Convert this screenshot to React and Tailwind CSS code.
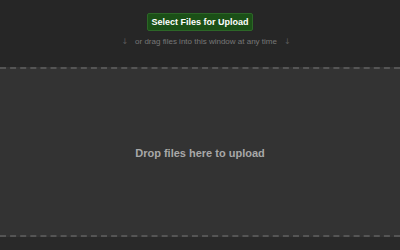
export default function App() {
  return (
    <div className="w-[400px] h-[250px] bg-[#262626] flex flex-col overflow-hidden" style={{ fontFamily: '"Liberation Sans", Arial, sans-serif' }}>
      <div className="h-[67px] flex flex-col items-center pt-[13px]">
        <button className="h-[18px] w-[106px] bg-[#1b5017] border border-[#2c6627] rounded-[2px] text-white text-[9px] font-bold leading-none">
          Select Files for Upload
        </button>
        <div className="mt-[5px] ml-[12px] flex items-center gap-[7px] text-[8px] text-[#777777]">
          <span className="text-[#5a5a5a] text-[8px] font-['DejaVu_Sans']">↓</span>
          <span>or drag files into this window at any time</span>
          <span className="text-[#5a5a5a] text-[8px] font-['DejaVu_Sans']">↓</span>
        </div>
      </div>
      <div className="h-[170px] bg-[#333333] border-y-2 border-dashed border-[#555555] flex items-center justify-center">
        <span className="mt-[2px] text-[11px] font-bold text-[#a8a8a8]">Drop files here to upload</span>
      </div>
      <div className="flex-1 bg-[#292929]" />
    </div>
  );
}
